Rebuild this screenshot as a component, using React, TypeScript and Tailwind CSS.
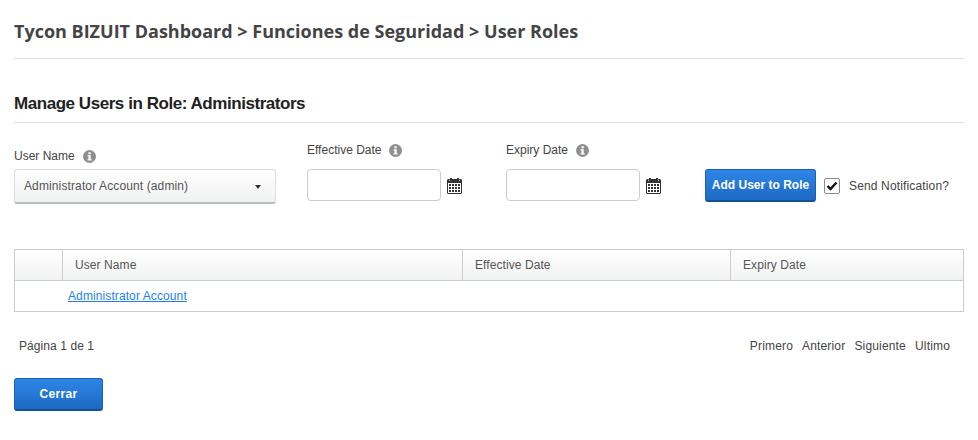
const SANS = "font-['Liberation_Sans',Arial,sans-serif]";

function InfoIcon() {
  return (
    <svg width="13" height="13" viewBox="0 0 14 14" className="shrink-0">
      <circle cx="7" cy="7" r="7" fill="#8f8f8f" />
      <rect x="5.9" y="2.4" width="2.4" height="2.2" fill="#fff" />
      <path d="M4.9 5.7h3.4v4.2h1v1.4H4.9V9.9h1V7.1h-1z" fill="#fff" />
    </svg>
  );
}

function CalendarIcon() {
  return (
    <svg width="15" height="16" viewBox="0 0 15 16" className="mt-[1px] shrink-0">
      <path d="M1 1h2V0h2v1h5V0h2v1h2l1 1v13l-1 1H1l-1-1V2z" fill="#333" />
      <rect x="2" y="1.6" width="1" height="1.4" fill="#bbb" />
      <rect x="12" y="1.6" width="1" height="1.4" fill="#bbb" />
      <rect x="1" y="5" width="13" height="10" fill="#fff" />
      {[6, 9, 12].map((y) =>
        [2, 5, 8, 11].map((x) => (
          <rect key={`${x}-${y}`} x={x} y={y} width="2" height="2" fill="#333" />
        ))
      )}
    </svg>
  );
}

function FieldLabel({ text, className }: { text: string; className: string }) {
  return (
    <div className={`flex items-center gap-[8px] text-[12px] leading-[14px] text-[#444] ${className}`}>
      <span>{text}</span>
      <InfoIcon />
    </div>
  );
}

function DateField({ label, className }: { label: string; className: string }) {
  return (
    <div className={className}>
      <FieldLabel text={label} className="h-[14px]" />
      <div className="mt-[12px] flex items-center gap-[6px]">
        <input
          type="text"
          className="h-[32px] w-[134px] rounded-[4px] border border-[#ccc] bg-white"
        />
        <CalendarIcon />
      </div>
    </div>
  );
}

export default function App() {
  return (
    <main className={`${SANS} h-[440px] w-[978px] overflow-hidden bg-white px-[14px]`}>
      {/* Breadcrumb */}
      <header className="h-[59px] border-b border-[#ddd] pt-[18px]">
        <h1 className="font-['Open_Sans',sans-serif] text-[18px] leading-[26px] font-bold text-[#444]">
          Tycon BIZUIT Dashboard &gt; Funciones de Seguridad &gt; User Roles
        </h1>
      </header>

      <div className="w-[950px]">
        <h2 className="mt-[34px] h-[30px] border-b border-[#ddd] text-[17px] leading-[22px] font-bold tracking-[-0.45px] text-[#222]">
          Manage Users in Role: Administrators
        </h2>

        {/* Add user form */}
        <div className="mt-[20px] flex items-start">
          <div className="mt-[6px] w-[262px]">
            <FieldLabel text="User Name" className="h-[14px]" />
            <div className="mt-[6px] flex h-[35px] items-center justify-between rounded-[3px] border border-[#ddd] border-b-2 border-b-[#bbb] bg-gradient-to-b from-white to-[#f0f1f1] pr-[13px] pl-[9px] text-[12px] tracking-[0.12px] text-[#555]">
              <span>Administrator Account (admin)</span>
              <span className="mt-[2px] mr-[1px] h-0 w-0 border-x-[3.5px] border-t-[4px] border-x-transparent border-t-[#333]" />
            </div>
          </div>

          <DateField label="Effective Date" className="ml-[31px] w-[199px]" />
          <DateField label="Expiry Date" className="w-[199px]" />

          <div className="mt-[26px] flex h-[33px] items-center">
            <button className="h-[33px] w-[111px] rounded-[3px] border border-[#1a5fb4] border-b-2 border-b-[#17518f] bg-gradient-to-b from-[#2e86e6] to-[#1c6ac4] text-[12px] font-bold text-white">
              Add User to Role
            </button>
            <span className="ml-[8px] flex h-[16px] w-[16px] items-center justify-center rounded-[2px] border border-[#8a8a8a] bg-white">
              <svg width="12" height="10" viewBox="0 0 12 10">
                <path d="M1.5 5l3 3 6-6.5" fill="none" stroke="#111" strokeWidth="2.4" />
              </svg>
            </span>
            <span className="ml-[9px] text-[12px] tracking-[0.15px] text-[#444]">Send Notification?</span>
          </div>
        </div>

        {/* Users table */}
        <div className="mt-[45px] h-[63px] border border-[#ccc] text-[12px]">
          <div className="flex h-[31px] border-b border-[#ccc] bg-gradient-to-b from-white to-[#f1f2f2] leading-[30px] tracking-[0.08px] text-[#555]">
            <div className="w-[48px] border-r border-[#ccc]" />
            <div className="w-[400px] border-r border-[#ccc] pl-[12px]">User Name</div>
            <div className="w-[268px] border-r border-[#ccc] pl-[12px]">Effective Date</div>
            <div className="flex-1 pl-[12px]">Expiry Date</div>
          </div>
          <div className="pl-[53px] leading-[30px]">
            <a href="#" className="tracking-[0.1px] text-[#1e80f0] underline">Administrator Account</a>
          </div>
        </div>

        {/* Pager */}
        <div className="mt-[27px] flex justify-between pr-[14px] pl-[5px] text-[12px] leading-[14px] text-[#444]">
          <span className="tracking-[0.08px]">Página 1 de 1</span>
          <div className="flex gap-[9px] tracking-[0.17px]">
            <span>Primero</span>
            <span>Anterior</span>
            <span>Siguiente</span>
            <span>Ultimo</span>
          </div>
        </div>

        <button className="mt-[25px] h-[33px] w-[89px] rounded-[3px] border border-[#1a5fb4] border-b-2 border-b-[#17518f] bg-gradient-to-b from-[#2e86e6] to-[#1c6ac4] text-[12px] font-bold tracking-[0.3px] text-white">
          Cerrar
        </button>
      </div>
    </main>
  );
}
